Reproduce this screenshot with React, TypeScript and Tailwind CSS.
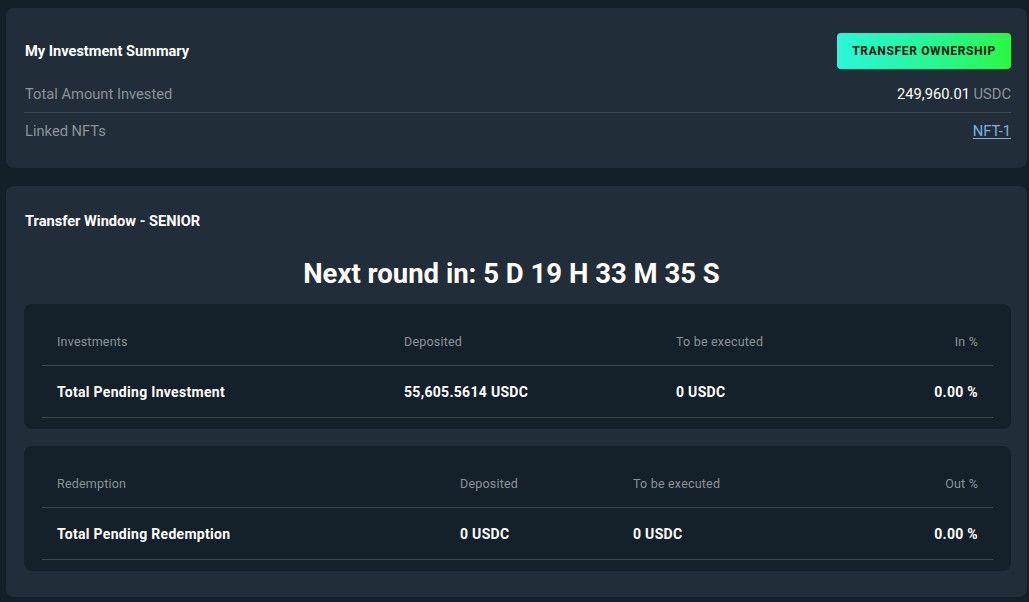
import React from 'react';

const font = { fontFamily: 'Roboto, "Liberation Sans", sans-serif' };

type Col = { label: string; value: string; width: string; align?: 'right' };

function PendingTable({ cols }: { cols: Col[] }) {
    return (
        <div className="rounded-lg bg-[#14212a] pt-[19px] px-[18px] pb-[11px]">
            {/* header row */}
            <div className="flex h-[43px] items-end border-b border-[#3d4750] pb-[15px] text-[12.5px] text-[#8b949b] tracking-[0.2px]">
                {cols.map((c) => (
                    <div
                        key={c.label}
                        className={`px-[15px] leading-4 ${c.align === 'right' ? 'flex-1 text-right' : ''}`}
                        style={c.align === 'right' ? undefined : { width: c.width }}
                    >
                        {c.label}
                    </div>
                ))}
            </div>
            {/* value row */}
            <div className="flex h-[52px] items-center border-b border-[#3d4750] pt-[2px] text-[14px] font-bold text-white tracking-[0.3px]">
                {cols.map((c) => (
                    <div
                        key={c.label}
                        className={`px-[15px] ${c.align === 'right' ? 'flex-1 text-right' : ''}`}
                        style={c.align === 'right' ? undefined : { width: c.width }}
                    >
                        {c.value}
                    </div>
                ))}
            </div>
        </div>
    );
}

export default function App() {
    const investments: Col[] = [
        { label: 'Investments', value: 'Total Pending Investment', width: '347px' },
        { label: 'Deposited', value: '55,605.5614 USDC', width: '272px' },
        { label: 'To be executed', value: '0 USDC', width: '200px' },
        { label: 'In %', value: '0.00 %', width: '', align: 'right' },
    ];
    const redemption: Col[] = [
        { label: 'Redemption', value: 'Total Pending Redemption', width: '403px' },
        { label: 'Deposited', value: '0 USDC', width: '173px' },
        { label: 'To be executed', value: '0 USDC', width: '200px' },
        { label: 'Out %', value: '0.00 %', width: '', align: 'right' },
    ];

    return (
        <div className="min-h-screen w-full bg-[#13202a] pt-[8px] pl-[6px] pr-[2px] pb-[5px]" style={font}>
            {/* Investment summary */}
            <div className="rounded-lg bg-[#212d39] pl-[18px] pr-[16px] pt-[25px] pb-[19px]">
                <div className="flex h-[36px] items-center justify-between">
                    <h2 className="pl-px pt-[2px] text-[14.6px] font-bold text-white">My Investment Summary</h2>
                    <button className="h-[36px] w-[174px] rounded-[4px] bg-gradient-to-r from-[#2af7d9] to-[#2bf73c] text-[12px] font-bold tracking-[0.65px] text-[#0b1512]">
                        TRANSFER OWNERSHIP
                    </button>
                </div>
                <div className="mt-[7px] flex h-[37px] items-center justify-between border-b border-[#3d4750] text-[14.7px]">
                    <span className="pl-px text-[#8b949b]">Total Amount Invested</span>
                    <span className="text-white">
                        249,960.01 <span className="text-[#8b949b]">USDC</span>
                    </span>
                </div>
                <div className="flex h-[36px] items-center justify-between text-[14.7px]">
                    <span className="pl-px text-[#8b949b]">Linked NFTs</span>
                    <a className="text-[#7fb2dc] underline underline-offset-2">NFT-1</a>
                </div>
            </div>

            {/* Transfer window */}
            <div className="mt-[18px] rounded-lg bg-[#212d39] pl-[18px] pr-[16px] pt-[26px] pb-[26px]">
                <h2 className="pl-px text-[14.6px] font-bold leading-[18px] text-white">Transfer Window - SENIOR</h2>
                <div className="mt-[28px] pr-[12px] text-center text-[27.5px] font-bold leading-[32px] text-white">
                    Next round in: 5 D 19 H 33 M 35 S
                </div>
                <div className="mt-[14px]">
                    <PendingTable cols={investments} />
                </div>
                <div className="mt-[17px]">
                    <PendingTable cols={redemption} />
                </div>
            </div>
        </div>
    );
}
